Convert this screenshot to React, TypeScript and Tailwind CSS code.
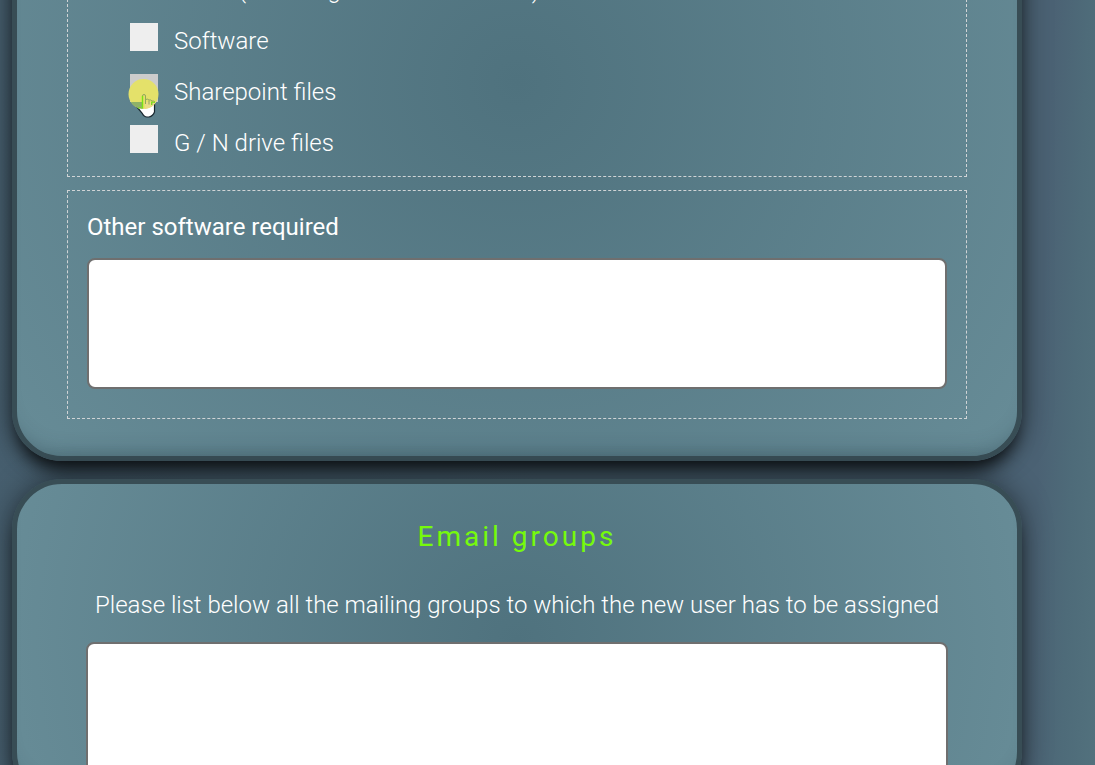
import { useState } from "react";

const card =
  "rounded-[50px] border-[5px] border-[#384d55] bg-[radial-gradient(circle_at_center,#4f727e_0%,#678c97_100%)] px-[50px] shadow-[0_0_30px_rgba(0,0,0,0.45),0_14px_18px_-6px_rgba(0,0,0,0.8),inset_0_-20px_20px_-18px_rgba(30,50,60,0.35)]";

const field =
  "block w-full resize-none rounded-[8px] border-2 border-[#6f6f6f] bg-white p-3 text-[22px] text-gray-800 outline-none";

const options = [
  { id: "mail", label: "Email (including shared mailboxes)", box: "bg-[#eeeeee]" },
  { id: "software", label: "Software", box: "bg-[#eeeeee]" },
  { id: "sharepoint", label: "Sharepoint files", box: "bg-[#cccccc]", pointer: true },
  { id: "drive", label: "G / N drive files", box: "bg-[#eeeeee]" },
];

function Pointer() {
  return (
    <svg
      className="pointer-events-none absolute top-0 -left-1 z-10"
      width="36"
      height="46"
      viewBox="126 74 36 46"
      aria-hidden="true"
    >
      <path
        d="M137 107L142 113Q144 117 147 117H149Q153 116 154.500 112V103H140z"
        fill="#ffffff"
        stroke="#18262e"
        strokeWidth="1.2"
      />
      <circle cx="143.5" cy="94" r="15" fill="#e4e16a" />
      <path d="M130.800 102H142.500V109A15 15 0 0 1 130.800 102z" fill="#8eb168" />
      <path d="M145 102h11.200a15 15 0 0 1 -11.200 7z" fill="#eadc86" />
      <path d="M142.500 108.500V96" fill="none" stroke="#78e414" strokeWidth="1.4" />
      <path d="M142.500 96q0-1.500 1.500-1.500t1.500 1.500v8M145.500 99.500q2-1 3.500 .5q2-.5 3 1q2-.3 3 1M149 100.500v4M152 101.500v3.500" fill="none" stroke="#91a55d" strokeWidth="1" />
      <path d="M138 108.300l3-1M151.500 105v-3l3.500 .500" fill="none" stroke="#78e414" strokeWidth="1" />
    </svg>
  );
}

export default function App() {
  const [checked, setChecked] = useState<Record<string, boolean>>({});

  return (
    <div className="h-screen overflow-hidden bg-[linear-gradient(92deg,#465e6e_0%,#4b6373_50%,#4b6274_94%,#4e6b79_97%,#52717d_100%)] font-['Roboto','Noto_Sans',sans-serif] text-[24px] font-light text-white">
      <main className="-mt-[296px] mr-[73px] ml-3 flex flex-col gap-[18px]">
        <section className={`${card} pt-[50px] pb-[37px]`}>
          <fieldset className="border border-dashed border-[#d0d4d6] px-[62px] pt-[212px]">
            <legend className="sr-only">Access required</legend>
            {options.map((o) => (
              <div key={o.id} className="relative flex h-[51px] items-start gap-4">
                <input
                  id={o.id}
                  type="checkbox"
                  checked={!!checked[o.id]}
                  onChange={(e) => setChecked({ ...checked, [o.id]: e.target.checked })}
                  className={`size-7 shrink-0 cursor-pointer appearance-none checked:bg-[#78e414] ${o.box}`}
                />
                <label htmlFor={o.id} className="cursor-pointer pt-1 leading-[28px]">
                  {o.label}
                </label>
                {o.pointer && <Pointer />}
              </div>
            ))}
          </fieldset>

          <div className="mt-[13px] border border-dashed border-[#d0d4d6] px-[19px] pt-[22px] pb-[29px]">
            <label htmlFor="other" className="block leading-[28px] font-normal">
              Other software required
            </label>
            <textarea id="other" className={`${field} mt-[17px] h-[131px]`} />
          </div>
        </section>

        <section className={`${card} pt-[33px] pb-[24px]`}>
          <h2 className="text-center text-[28px] leading-[40px] font-normal tracking-[3px] text-[#76fa0c]">
            Email groups
          </h2>
          <div className="px-[19px] pt-[34px]">
            <label htmlFor="groups" className="block text-center leading-[28px]">
              Please list below all the mailing groups to which the new user has to be assigned
            </label>
            <textarea id="groups" className={`${field} mt-[23px] h-[131px]`} />
          </div>
        </section>
      </main>
    </div>
  );
}
